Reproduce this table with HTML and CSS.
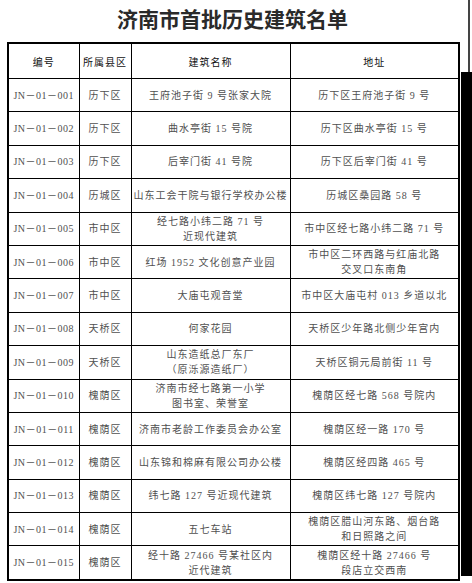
FILE: index.html
```html
<!DOCTYPE html>
<html lang="zh">
<head>
<meta charset="utf-8">
<link rel="stylesheet" href="styles.css">
</head>
<body>
<div class="page">
  <main class="sheet">
    <h1 class="title">济南市首批历史建筑名单</h1>
    <table class="list">
      <colgroup>
        <col class="c-id"><col class="c-dist"><col class="c-name"><col class="c-addr">
      </colgroup>
      <thead>
        <tr><th>编号</th><th>所属县区</th><th>建筑名称</th><th>地址</th></tr>
      </thead>
      <tbody>
        <tr><td class="id">JN－01－001</td><td>历下区</td><td>王府池子街 9 号张家大院</td><td>历下区王府池子街 9 号</td></tr>
        <tr><td class="id">JN－01－002</td><td>历下区</td><td>曲水亭街 15 号院</td><td>历下区曲水亭街 15 号</td></tr>
        <tr><td class="id">JN－01－003</td><td>历下区</td><td>后宰门街 41 号院</td><td>历下区后宰门街 41 号</td></tr>
        <tr><td class="id">JN－01－004</td><td>历城区</td><td>山东工会干院与银行学校办公楼</td><td>历城区桑园路 58 号</td></tr>
        <tr><td class="id">JN－01－005</td><td>市中区</td><td>经七路小纬二路 71 号<br>近现代建筑</td><td>市中区经七路小纬二路 71 号</td></tr>
        <tr><td class="id">JN－01－006</td><td>市中区</td><td>红场 1952 文化创意产业园</td><td>市中区二环西路与红庙北路<br>交叉口东南角</td></tr>
        <tr><td class="id">JN－01－007</td><td>市中区</td><td>大庙屯观音堂</td><td>市中区大庙屯村 013 乡道以北</td></tr>
        <tr><td class="id">JN－01－008</td><td>天桥区</td><td>何家花园</td><td>天桥区少年路北侧少年宫内</td></tr>
        <tr><td class="id">JN－01－009</td><td>天桥区</td><td>山东造纸总厂东厂<br>（原泺源造纸厂）</td><td>天桥区铜元局前街 11 号</td></tr>
        <tr><td class="id">JN－01－010</td><td>槐荫区</td><td>济南市经七路第一小学<br>图书室、荣誉室</td><td>槐荫区经七路 568 号院内</td></tr>
        <tr><td class="id">JN－01－011</td><td>槐荫区</td><td>济南市老龄工作委员会办公室</td><td>槐荫区经一路 170 号</td></tr>
        <tr><td class="id">JN－01－012</td><td>槐荫区</td><td>山东锦和棉麻有限公司办公楼</td><td>槐荫区经四路 465 号</td></tr>
        <tr><td class="id">JN－01－013</td><td>槐荫区</td><td>纬七路 127 号近现代建筑</td><td>槐荫区纬七路 127 号院内</td></tr>
        <tr><td class="id">JN－01－014</td><td>槐荫区</td><td>五七车站</td><td>槐荫区腊山河东路、烟台路<br>和日照路之间</td></tr>
        <tr><td class="id">JN－01－015</td><td>槐荫区</td><td>经十路 27466 号某社区内<br>近代建筑</td><td>槐荫区经十路 27466 号<br>段店立交西南</td></tr>
      </tbody>
    </table>
  </main>
  <div class="edge">
    <div class="edge-line"></div>
    <div class="edge-block"></div>
  </div>
</div>
</body>
</html>
```

FILE: styles.css
```css
html, body {
  margin: 0;
  padding: 0;
  background: #fff;
}
.page {
  display: flex;
  width: 472px;
  height: 583px;
  overflow: hidden;
}
.sheet {
  width: 461px;
  flex: none;
}
.title {
  margin: 0;
  height: 42px;
  width: 465px;
  line-height: 37px;
  text-align: center;
  font-family: "Noto Sans CJK SC", sans-serif;
  font-weight: 700;
  font-size: 21px;
  color: #2a2a2a;
}
.list {
  margin-left: 7px;
  width: 451px;
  border-collapse: collapse;
  table-layout: fixed;
  border: 2px solid #000;
}
.c-id { width: 71px; }
.c-dist { width: 52px; }
.c-name { width: 159px; }
.c-addr { width: 169px; }
.list th, .list td {
  border: 1px solid #000;
  padding: 0;
  text-align: center;
  vertical-align: middle;
  white-space: nowrap;
}
.list th {
  height: 34px;
  font-family: "Noto Sans CJK SC", sans-serif;
  font-weight: 400;
  font-size: 10px;
  letter-spacing: 1px;
  color: #111;
}
.list td {
  height: 32.4px;
  font-family: "Liberation Serif", "Noto Sans CJK SC", serif;
  font-size: 10px;
  line-height: 15px;
  letter-spacing: 1px;
  color: #505050;
}
.list td.id {
  letter-spacing: 0.5px;
}
.edge {
  flex: none;
  width: 11px;
  display: flex;
  flex-direction: column;
}
.edge-line {
  height: 72px;
  width: 2px;
  margin-left: 7px;
  background: #444;
}
.edge-block {
  height: 504px;
  background: #000;
}
```
